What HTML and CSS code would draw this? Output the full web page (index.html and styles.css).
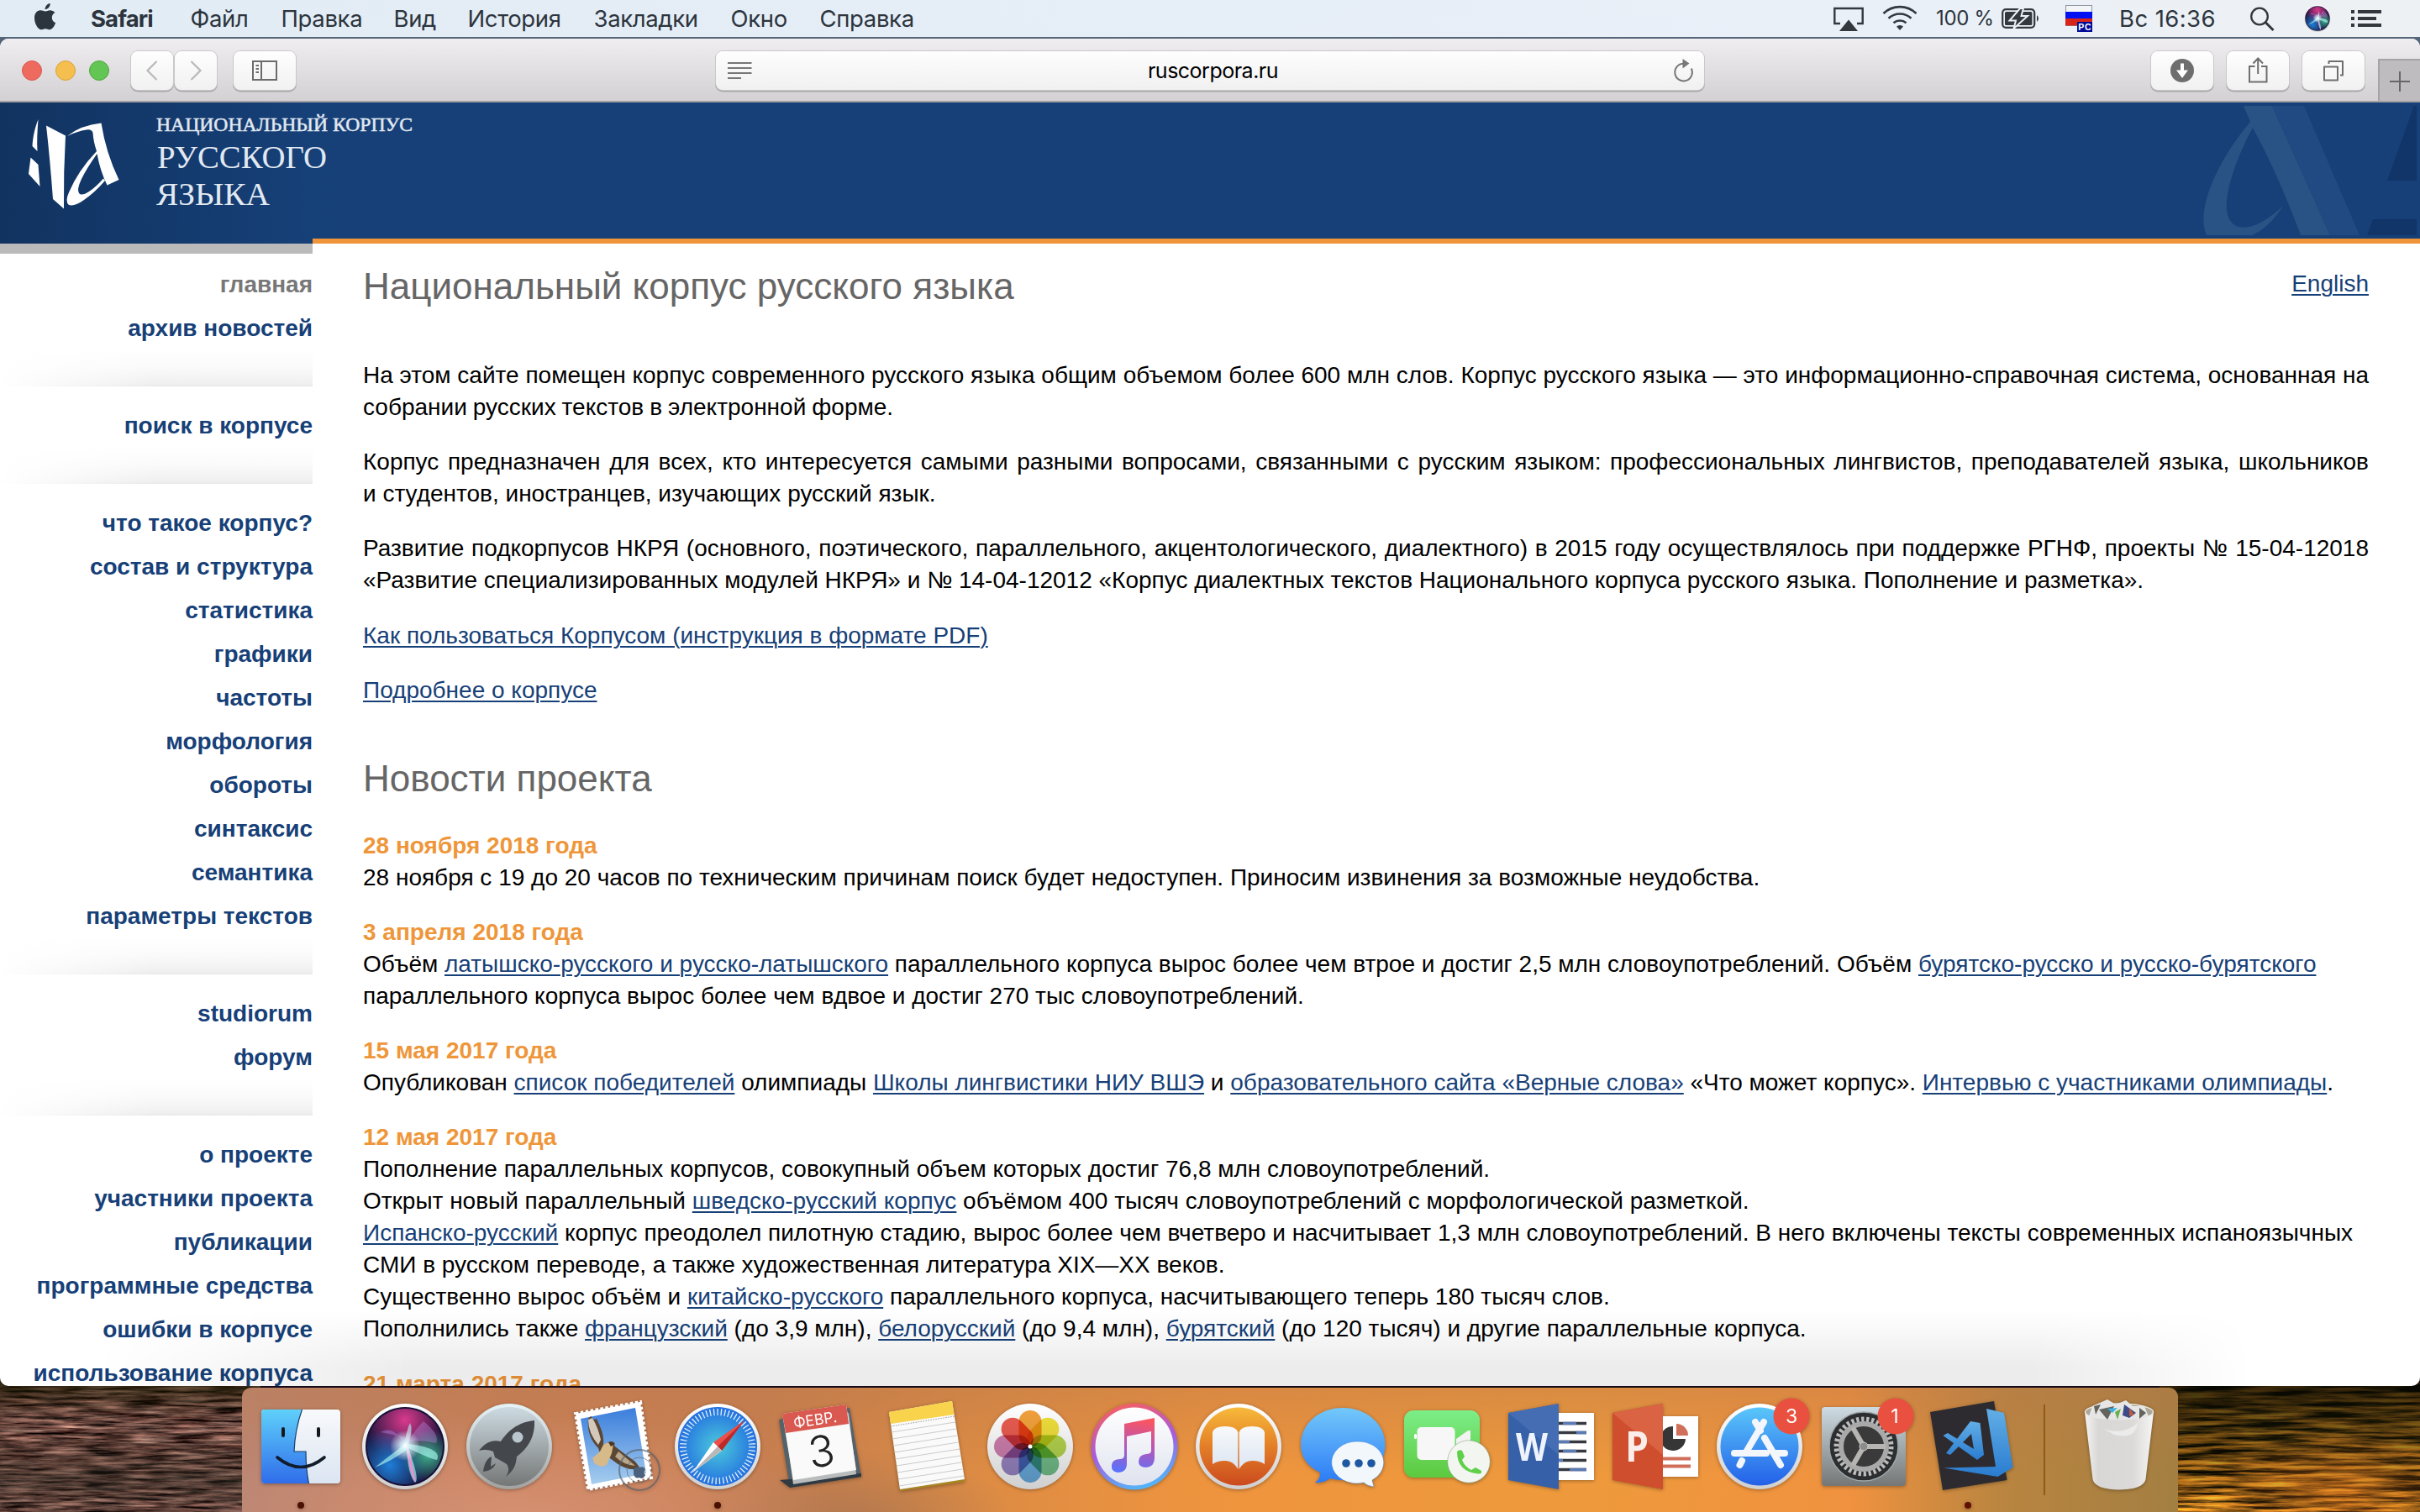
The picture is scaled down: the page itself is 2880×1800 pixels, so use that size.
FILE: index.html
```html
<!DOCTYPE html>
<html lang="ru">
<head>
<meta charset="utf-8">
<title>Национальный корпус русского языка</title>
<link rel="stylesheet" href="styles.css">
</head>
<body>
<svg class="wallpaper" width="2880" height="160" viewBox="0 0 2880 160">
  <defs>
    <filter id="ripL" x="0" y="0" width="100%" height="100%" color-interpolation-filters="sRGB">
      <feTurbulence type="fractalNoise" baseFrequency="0.02 0.26" numOctaves="5" seed="4"/>
      <feColorMatrix values="1.3 0 0 0 -0.25  1.0 .1 0 0 -0.28  .9 .1 0 0 -0.26  0 0 0 0 1"/>
    </filter>
    <filter id="ripR" x="0" y="0" width="100%" height="100%" color-interpolation-filters="sRGB">
      <feTurbulence type="fractalNoise" baseFrequency="0.012 0.2" numOctaves="5" seed="9"/>
      <feColorMatrix values="2.6 .3 0 0 -0.93  1.6 .1 0 0 -0.52  .4 0 0 0 -0.12  0 0 0 0 1"/>
    </filter>
    <linearGradient id="shade" x1="0" y1="0" x2="0" y2="1"><stop offset="0" stop-color="#080802" stop-opacity=".85"/><stop offset=".45" stop-color="#181805" stop-opacity=".5"/><stop offset="1" stop-color="#301800" stop-opacity="0"/></linearGradient>
    <linearGradient id="shadeL" x1="0" y1="0" x2="0" y2="1"><stop offset="0" stop-color="#1c1c00" stop-opacity=".8"/><stop offset=".35" stop-color="#281c10" stop-opacity="0"/><stop offset=".75" stop-color="#282820" stop-opacity=".45"/><stop offset="1" stop-color="#282820" stop-opacity=".1"/></linearGradient>
    <radialGradient id="glow" cx=".7" cy=".85" r=".5"><stop offset="0" stop-color="#e87a22" stop-opacity=".45"/><stop offset="1" stop-color="#c07020" stop-opacity="0"/></radialGradient>
  </defs>
  <rect width="2880" height="160" fill="#150a18"/>
  <rect width="310" height="160" filter="url(#ripL)"/><rect width="310" height="160" fill="url(#shadeL)"/>
  <rect x="2570" width="310" height="160" filter="url(#ripR)"/><rect x="2570" width="310" height="160" fill="url(#shade)"/><rect x="2570" width="310" height="160" fill="url(#glow)"/>
</svg>

<header class="menubar">
  <svg class="apple" width="30" height="34" viewBox="0 0 30 34"><path d="M15 9.500c-2-.3-3.500-1.200-5.800-1.200C4.700 8.300 2 12.300 2 17.500c0 6.500 4.200 13.800 8 13.800 2 0 2.900-1.100 5.100-1.100 2.200 0 3 1.100 5 1.100 3.200 0 6-4.600 7-8.200-2.700-1.200-4.300-3.300-4.300-6.200 0-2.600 1.400-4.500 3.600-5.800-1.500-2-3.600-2.900-6-2.900-2.200 0-3.600 1.300-5.400 1.300zM14.500 7.200c.2-3.600 2.600-6.600 6.200-7.200.3 3.700-2.800 7.200-6.200 7.200z" fill="#2c343d"/></svg>
  <nav class="menus">
    <span class="m app">Safari</span><span class="m m1">Файл</span><span class="m m2">Правка</span><span class="m m3">Вид</span><span class="m m4">История</span><span class="m m5">Закладки</span><span class="m m6">Окно</span><span class="m m7">Справка</span>
  </nav>
  <div class="status">
    <svg class="s-air" width="36" height="30" viewBox="0 0 36 30"><path d="M8 20H1.300V2H34.700V20H28" fill="none" stroke="#33383f" stroke-width="2.400"/><path d="M18 15.500L29 29H7z" fill="#33383f"/></svg>
    <svg class="s-wifi" width="42" height="30" viewBox="0 0 42 30"><g fill="none" stroke="#33383f" stroke-width="2.600"><path d="M1.500 10A28 28 0 0 1 40.500 10"/><path d="M7.500 15.800A20 20 0 0 1 34.500 15.800"/><path d="M13.500 21.300A11.500 11.500 0 0 1 28.500 21.300"/></g><path d="M17 25.500a6 6 0 0 1 8 0L21 30z" fill="#33383f"/></svg>
    <span class="pct">100 %</span>
    <svg class="s-bat" width="46" height="24" viewBox="0 0 46 24"><rect x="1.200" y="1.200" width="38" height="21.600" rx="4" fill="none" stroke="#33383f" stroke-width="2.200"/><rect x="4" y="4" width="32.400" height="16" rx="1.500" fill="#33383f"/><path d="M42 8q4 4 0 8z" fill="#33383f"/><path d="M22 0L9.500 14.500H17L14.500 24 31 9H23.500L26 0z" fill="#33383f" stroke="#eaf0f7" stroke-width="2"/></svg>
    <svg class="s-flag" width="32" height="34" viewBox="0 0 32 34"><rect x=".5" y=".5" width="31" height="24" fill="#f2f4f6" stroke="#8d95a0"/><rect y="8" width="32" height="8" fill="#0010f0"/><rect y="16" width="32" height="8.500" fill="#d82318"/><rect x="14" y="20" width="18" height="12" fill="#000a9a"/><text x="15.200" y="30" font-family="Liberation Sans, sans-serif" font-weight="700" font-size="10.500" textLength="15.500" fill="#fff">РС</text></svg>
    <span class="clock">Вс 16:36</span>
    <svg class="s-find" width="30" height="30" viewBox="0 0 30 30"><circle cx="11" cy="11.500" r="9.800" fill="none" stroke="#33383f" stroke-width="2.300"/><path d="M18 18.500L27.500 28" stroke="#33383f" stroke-width="3"/></svg>
    <svg class="s-siri" width="32" height="32" viewBox="11 19 102 102"><use href="#siri"/></svg>
    <svg class="s-list" width="36" height="22" viewBox="0 0 36 22"><path d="M0 3H4M0 11H4M0 19H4M8 3H36M8 11H30M8 19H36" stroke="#33383f" stroke-width="3.800"/></svg>
  </div>
</header>

<main class="window">
  <div class="toolbar">
    <div class="lights"><i class="red"></i><i class="yellow"></i><i class="green"></i></div>
    <div class="navbtns">
      <div class="btn half"><svg width="50" height="46" viewBox="0 0 50 46"><path d="M30.500 12L19.500 23 30.500 34" fill="none" stroke="#b9b9b9" stroke-width="2.200"/></svg></div>
      <div class="btn half"><svg width="50" height="46" viewBox="0 0 50 46"><path d="M19.500 12L30.500 23 19.500 34" fill="none" stroke="#b9b9b9" stroke-width="2.200"/></svg></div>
    </div>
    <div class="btn side"><svg width="74" height="46" viewBox="0 0 74 46"><path d="M23 12H51V34H23zM33 12V34" fill="none" stroke="#6c6c6c" stroke-width="2"/><path d="M26.500 17H30M26.500 21H30M26.500 25H30" stroke="#6c6c6c" stroke-width="2"/></svg></div>
    <div class="address">
      <svg width="30" height="24" viewBox="0 0 30 24"><path d="M0 3H28.500M0 9H28.500M0 15H28.500M0 21H16" stroke="#777" stroke-width="2"/></svg>
      <span>ruscorpora.ru</span>
      <svg width="26" height="30" viewBox="0 0 26 30"><path d="M21.800 12.500A10.300 10.300 0 1 1 12.500 6.800" fill="none" stroke="#777" stroke-width="2"/><path d="M11.500 1L19.500 6.500 11.500 12.500z" fill="#777"/></svg>
    </div>
    <div class="actions">
      <div class="btn"><svg width="74" height="46" viewBox="0 0 74 46"><circle cx="37" cy="23" r="14" fill="#6e6e6e"/><path d="M35 14.500H39V22.500H44L37 32 30 22.500H35z" fill="#fff"/></svg></div>
      <div class="btn"><svg width="74" height="46" viewBox="0 0 74 46"><path d="M33.500 18H27V36.500H47.500V18H41M37.200 27V9M31.500 14.500L37.200 8.500 43 14.500" fill="none" stroke="#6e6e6e" stroke-width="2"/></svg></div>
      <div class="btn"><svg width="74" height="46" viewBox="0 0 74 46"><path d="M26 18.500H42V34.500H26zM31.500 15V12H48V28.500H45" fill="none" stroke="#6e6e6e" stroke-width="2" stroke-linejoin="round"/></svg></div>
    </div>
    <div class="newtab"><svg width="24" height="24" viewBox="0 0 24 24"><path d="M0 12H24M12 0V24" stroke="#666" stroke-width="2"/></svg></div>
  </div>

  <div class="banner">
    <svg class="logo" width="520" height="168" viewBox="0 122 520 168">
      <g fill="#fff"><path d="M45.500 142C41 153 39 165 38.500 174L44.500 180C43.800 168 44.500 155 45.500 142z"/><path d="M36.500 187.500L45.500 196 47.500 222 34 207z"/><path d="M55 149.500L78 161.500Q75.500 205 76 248.500L63 237Q59.500 190 55 149.500z"/><path d="M80 162Q96 149 120.500 146.500Q126 182 141.500 214L127.500 220.500Q119 203 115.500 183Q104 199 97 213Q91 226 94 230Q97 234 106 228Q115 222 123 212.500L125 215Q113 229 100 238Q89 246 82 244Q77 240 82 229Q93 203 115 180Q111 168 110.500 158Q109 153.500 103 154.500Q92 156 80 162z"/></g>
      <g fill="#e2e9f2" font-family="Liberation Serif, serif"><text x="186" y="155.800" font-size="23.500" stroke="#e2e9f2" stroke-width=".5" textLength="305" lengthAdjust="spacingAndGlyphs">НАЦИОНАЛЬНЫЙ КОРПУС</text><text x="187" y="200" font-size="38" textLength="202" lengthAdjust="spacingAndGlyphs">РУССКОГО</text><text x="186" y="244" font-size="38" textLength="135" lengthAdjust="spacingAndGlyphs">ЯЗЫКА</text></g>
    </svg>
    <svg class="mark" width="260" height="154" viewBox="2616 126 260 154">
      <path d="M2670 126H2704L2773 280H2738Q2710 205 2681 152C2660 190 2648 230 2650 250C2653 277 2680 280 2717 245Q2700 272 2680 280H2626C2612 250 2640 190 2678 145z" fill="#2a5385"/><path d="M2704 126H2742L2808 280H2773z" fill="#214a82"/>
      <path d="M2873 126H2876V215H2841zM2824 261H2876V280H2817z" fill="#113469"/>
    </svg>
  </div>

  <div class="page">
    <aside class="sidebar">
      <ul><li class="current">главная</li><li>архив новостей</li></ul>
      <ul><li>поиск в корпусе</li></ul>
      <ul><li>что такое корпус?</li><li>состав и структура</li><li>статистика</li><li>графики</li><li>частоты</li><li>морфология</li><li>обороты</li><li>синтаксис</li><li>семантика</li><li>параметры текстов</li></ul>
      <ul><li>studiorum</li><li>форум</li></ul>
      <ul><li>о проекте</li><li>участники проекта</li><li>публикации</li><li>программные средства</li><li>ошибки в корпусе</li><li>использование корпуса</li></ul>
    </aside>
    <article class="content">
      <div class="head"><h1>Национальный корпус русского языка</h1><a>English</a></div>
      <p class="intro">На этом сайте помещен корпус современного русского языка общим объемом более 600 млн слов. Корпус русского языка — это информационно-справочная система, основанная на собрании русских текстов в электронной форме.</p>
      <p>Корпус предназначен для всех, кто интересуется самыми разными вопросами, связанными с русским языком: профессиональных лингвистов, преподавателей языка, школьников и&nbsp;студентов, иностранцев, изучающих русский язык.</p>
      <p>Развитие подкорпусов НКРЯ (основного, поэтического, параллельного, акцентологического, диалектного) в 2015 году осуществлялось при поддержке РГНФ, проекты № 15-04-12018 «Развитие специализированных модулей НКРЯ» и № 14-04-12012 «Корпус диалектных текстов Национального корпуса русского языка. Пополнение и разметка».</p>
      <p><a>Как пользоваться Корпусом (инструкция в формате PDF)</a></p>
      <p><a>Подробнее о корпусе</a></p>
      <h2>Новости проекта</h2>
      <section><h3>28 ноября 2018 года</h3>28 ноября с 19 до 20 часов по техническим причинам поиск будет недоступен. Приносим извинения за возможные неудобства.</section>
      <section><h3>3 апреля 2018 года</h3>Объём <a>латышско-русского и русско-латышского</a> параллельного корпуса вырос более чем втрое и достиг 2,5 млн словоупотреблений. Объём <a>бурятско-русско и русско-бурятского</a> параллельного корпуса вырос более чем вдвое и достиг 270 тыс словоупотреблений.</section>
      <section><h3>15 мая 2017 года</h3>Опубликован <a>список победителей</a> олимпиады <a>Школы лингвистики НИУ ВШЭ</a> и <a>образовательного сайта «Верные слова»</a> «Что может корпус». <a>Интервью с участниками олимпиады</a>.</section>
      <section><h3>12 мая 2017 года</h3>Пополнение параллельных корпусов, совокупный объем которых достиг 76,8 млн словоупотреблений.<br>Открыт новый параллельный <a>шведско-русский корпус</a> объёмом 400 тысяч словоупотреблений с морфологической разметкой.<br><a>Испанско-русский</a> корпус преодолел пилотную стадию, вырос более чем вчетверо и насчитывает 1,3 млн словоупотреблений. В него включены тексты современных испаноязычных СМИ в русском переводе, а также художественная литература XIX—XX веков.<br>Существенно вырос объём и <a>китайско-русского</a> параллельного корпуса, насчитывающего теперь 180 тысяч слов.<br>Пополнились также <a>французский</a> (до 3,9 млн), <a>белорусский</a> (до 9,4 млн), <a>бурятский</a> (до 120 тысяч) и другие параллельные корпуса.</section>
      <section><h3>21 марта 2017 года</h3></section>
    </article>
  </div>
</main>

<footer class="dock">
  <!-- Finder -->
  <svg viewBox="0 0 124 148"><defs><linearGradient id="fb" x1="0" y1="0" x2="0" y2="1"><stop offset="0" stop-color="#5fd0fa"/><stop offset="1" stop-color="#2f6dea"/></linearGradient><linearGradient id="fw" x1="0" y1="0" x2="0" y2="1"><stop offset="0" stop-color="#f8f9fb"/><stop offset="1" stop-color="#dbe5f2"/></linearGradient><linearGradient id="ring" x1="0" y1="0" x2="0" y2="1"><stop offset="0" stop-color="#fff"/><stop offset="1" stop-color="#cfcfcf"/></linearGradient></defs>
    <rect x="15" y="26" width="94" height="88" rx="4" fill="url(#fw)"/><path d="M19 26H63.500Q55 50 54 76H68Q68 97 71.500 114H19q-4 0-4-4V30q0-4 4-4z" fill="url(#fb)"/><path d="M63.500 26Q55 50 54 76H68Q68 97 71.500 114" fill="none" stroke="#17406c" stroke-width="1.200"/><path d="M41 49V57M83 49V57" stroke="#14181c" stroke-width="4" stroke-linecap="round"/><path d="M34 83Q62 106 90 83" fill="none" stroke="#101c2c" stroke-width="3.600" stroke-linecap="round"/><circle cx="62" cy="140" r="4" fill="#4a1000"/></svg>
  <!-- Siri -->
  <svg viewBox="0 0 124 148"><defs><radialGradient id="sr1" cx=".5" cy=".15" r=".55"><stop offset="0" stop-color="#d93a8c"/><stop offset="1" stop-color="#d93a8c" stop-opacity="0"/></radialGradient><radialGradient id="sr2" cx=".3" cy=".75" r=".5"><stop offset="0" stop-color="#1f7ed8"/><stop offset="1" stop-color="#1f7ed8" stop-opacity="0"/></radialGradient><radialGradient id="sr3" cx=".8" cy=".62" r=".35"><stop offset="0" stop-color="#3fae8c"/><stop offset="1" stop-color="#3fae8c" stop-opacity="0"/></radialGradient><radialGradient id="sr4"><stop offset="0" stop-color="#fff"/><stop offset=".3" stop-color="#dff" stop-opacity=".8"/><stop offset="1" stop-color="#fff" stop-opacity="0"/></radialGradient></defs>
    <g id="siri"><circle cx="62" cy="70" r="51" fill="url(#ring)"/><circle cx="62" cy="70" r="47" fill="#171038"/><circle cx="62" cy="70" r="45" fill="url(#sr1)"/><circle cx="62" cy="70" r="45" fill="url(#sr2)"/><circle cx="62" cy="70" r="45" fill="url(#sr3)"/><path d="M61 68Q42 82 26 95Q45 88 64 74Q66 105 74 113Q80 110 66 72Q90 84 100 86Q107 72 66 67Q72 50 68 42Q64 50 61 68z" fill="#a8f4ee" opacity=".65"/><path d="M33 53Q48 44 61 67Q72 60 99 66Q104 56 84 40Q76 48 68 60" fill="#b58ae0" opacity=".4"/><path d="M62 70L67 44 66 70 75 112Q70 112 64 76z" fill="#ff8ad0" opacity=".8"/><circle cx="62" cy="69" r="18" fill="url(#sr4)"/></g></svg>
  <!-- Launchpad -->
  <svg viewBox="0 0 124 148"><defs><linearGradient id="lp" x1="0" y1="0" x2="0" y2="1"><stop offset="0" stop-color="#cddbe2"/><stop offset="1" stop-color="#757776"/></linearGradient><linearGradient id="lpr" x1="0" y1="0" x2="0" y2="1"><stop offset="0" stop-color="#e6f3f7"/><stop offset="1" stop-color="#a2a29f"/></linearGradient></defs>
    <circle cx="62" cy="70" r="51" fill="url(#lpr)"/><circle cx="62" cy="70" r="47" fill="url(#lp)"/><path d="M92 39C72 41 60 52 52 64C40 61 32 67 26 75C34 73 38 74 43 76L45 83 54 88 59 91C62 96 62 100 58 106C68 98 70 92 71 82C83 73 93 60 92 39zM41 82C34 85 32 93 31 100C38 99 43 97 46 90L40 94z" fill="#44484c"/><circle cx="72" cy="59" r="6.500" fill="#b9c6ce"/></svg>
  <!-- Mail -->
  <svg viewBox="0 0 124 148"><defs><linearGradient id="sky" x1="0" y1="0" x2="0" y2="1"><stop offset="0" stop-color="#3b7edc"/><stop offset="1" stop-color="#a6cdee"/></linearGradient></defs>
    <path d="M17 31L94 17 107 107 32 121z" fill="#fff" stroke="#fff" stroke-width="4" stroke-dasharray="3.500 2.500"/><path d="M23 37L88 24 101 102 36 115z" fill="url(#sky)"/><path d="M32 37L35 34 39 38 42 37 46 46Q51 57 50 68L56 65 62 66 64 70Q74 78 88 88L94 96Q80 100 66 90L58 84Q46 82 44 72Q30 58 32 37z" fill="#5a4632"/><path d="M32 38Q32 54 44 68L47 62Q44 48 37 36z" fill="#d3c8ba"/><path d="M64 82Q74 92 88 93L80 86 68 76z" fill="#b9a58a"/><path d="M50 68Q56 63 62 67L60 78 54 92 48 94 40 91 37 84 46 76z" fill="#d7ba8a"/><path d="M56 65Q61 62 64 67L59 70z" fill="#4b3822"/><g fill="none" stroke="#55606c" opacity=".65"><circle cx="93" cy="98" r="24" stroke-width="2"/><circle cx="93" cy="98" r="15"/></g><path d="M86 97q3-4 7-2q5-2 7 2q-3 4 0 7q-3 6-7 3q-5 2-7-4zM93 93l3-5z" fill="#4c617c"/></svg>
  <!-- Safari -->
  <svg viewBox="0 0 124 148"><defs><radialGradient id="sf"><stop offset="0" stop-color="#4ccadb"/><stop offset="1" stop-color="#236fe0"/></radialGradient></defs>
    <circle cx="62" cy="70" r="51" fill="url(#ring)"/><circle cx="62" cy="70" r="47" fill="url(#sf)"/><circle cx="62" cy="70" r="41" fill="none" stroke="#e4f1fb" stroke-width="8" stroke-dasharray="1.300 3.070"/><path d="M94 39L57 65 67 75z" fill="#ee4f49"/><path d="M94 39L62 70 67 75z" fill="#bb2a29"/><path d="M32 101L57 65 67 75z" fill="#fff"/><path d="M32 101L62 70 67 75z" fill="#b8b8b8"/><circle cx="62" cy="140" r="4" fill="#4a1000"/></svg>
  <!-- Calendar -->
  <svg viewBox="0 0 124 148"><path d="M11 38L95 24 109 106 24 119z" fill="#54626b"/><path d="M12 110L109 102 109 106 24 119z" fill="#2f3a42"/><path d="M18 42L94 30 103 103 28 115z" fill="#b9bcbd"/><path d="M15 31L91 20 103 98 28 110z" fill="#fafafa"/><path d="M15 31L91 20 94 43 19 54z" fill="#d95850"/><g transform="rotate(-8.500 60 65)" text-anchor="middle"><text x="58" y="44" font-family="Inter, sans-serif" font-size="18" textLength="52" lengthAdjust="spacingAndGlyphs" fill="#fff">ФЕВР.</text><text x="60" y="94" font-family="Inter, sans-serif" font-size="51" font-weight="300" fill="#222">3</text></g></svg>
  <!-- Notes -->
  <svg viewBox="0 0 124 148"><path d="M18 29L93 16 108 112 31 123z" fill="#a88523"/><path d="M18 29L93 16 108 109 31 121z" fill="#fafafa"/><path d="M18 29L93 16 95.500 32 20 43z" fill="#f9d34b"/><path d="M20 46L96 34" stroke="#999" stroke-dasharray="1.500 1.500"/><path d="M21 53L97 41M22 61L98 49M23 69L99 57M24.500 77L100.500 65M25.500 85L102 73M27 93L103 81M28 101L104 89M29 109L105.500 97M30 117L107 105" stroke="#cbcbcb"/></svg>
  <!-- Photos -->
  <svg viewBox="0 0 124 148"><circle cx="62" cy="70" r="51" fill="url(#ring)"/><g class="petals"><rect x="48.500" y="27" width="27" height="43" rx="13.500" fill="#f3a23c"/><rect x="48.500" y="27" width="27" height="43" rx="13.500" fill="#f0e03c" transform="rotate(45 62 70)"/><rect x="48.500" y="27" width="27" height="43" rx="13.500" fill="#b6d64e" transform="rotate(90 62 70)"/><rect x="48.500" y="27" width="27" height="43" rx="13.500" fill="#74c08a" transform="rotate(135 62 70)"/><rect x="48.500" y="27" width="27" height="43" rx="13.500" fill="#6aaee0" transform="rotate(180 62 70)"/><rect x="48.500" y="27" width="27" height="43" rx="13.500" fill="#9a86c4" transform="rotate(225 62 70)"/><rect x="48.500" y="27" width="27" height="43" rx="13.500" fill="#d081b0" transform="rotate(270 62 70)"/><rect x="48.500" y="27" width="27" height="43" rx="13.500" fill="#ea5c50" transform="rotate(315 62 70)"/></g><circle cx="62" cy="70" r="2.500" fill="#fff"/></svg>
  <!-- iTunes -->
  <svg viewBox="0 0 124 148"><defs><linearGradient id="it" x1=".3" y1="0" x2=".6" y2="1"><stop offset="0" stop-color="#f8605c"/><stop offset=".5" stop-color="#a65be0"/><stop offset="1" stop-color="#4fb8f8"/></linearGradient><linearGradient id="nt" gradientUnits="userSpaceOnUse" x1="70" y1="38" x2="60" y2="102"><stop offset="0" stop-color="#fa5560"/><stop offset=".5" stop-color="#b457b8"/><stop offset="1" stop-color="#5a72fb"/></linearGradient><linearGradient id="iw" x1="0" y1="0" x2="0" y2="1"><stop offset="0" stop-color="#fff"/><stop offset="1" stop-color="#dfe3ee"/></linearGradient></defs>
    <circle cx="62" cy="70" r="51.500" fill="url(#it)"/><circle cx="62" cy="70" r="46.500" fill="url(#iw)"/><path d="M50 43L86 36V84Q86 94 76 95Q67 95 67 88Q67 80 76 79Q82 79 82 75V52L53 58V90Q53 101 42 101Q34 100 35 92Q36 85 45 85Q50 85 50 80z" fill="url(#nt)"/></svg>
  <!-- iBooks -->
  <svg viewBox="0 0 124 148"><defs><linearGradient id="ib" x1="0" y1="0" x2="0" y2="1"><stop offset="0" stop-color="#f7ba3b"/><stop offset=".5" stop-color="#e37e27"/><stop offset="1" stop-color="#cb4a1e"/></linearGradient></defs>
    <circle cx="62" cy="70" r="51" fill="url(#ring)"/><circle cx="62" cy="70" r="46.500" fill="url(#ib)"/><path d="M31 53Q33 46 46 46Q59 46 61.300 53V97Q55 86 45 87Q37 87 31 91zM93 53Q91 46 78 46Q65 46 62.700 53V97Q69 86 79 87Q87 87 93 91z" fill="url(#fw)"/></svg>
  <!-- Messages -->
  <svg viewBox="0 0 124 148"><defs><linearGradient id="ms" x1="0" y1="0" x2="0" y2="1"><stop offset="0" stop-color="#73c8fa"/><stop offset="1" stop-color="#2c7bf6"/></linearGradient></defs>
    <path d="M62 24C90 24 112.500 43 112.500 68S90 110 62 110Q54 110 47 108Q39 114 29 113Q36 108 35 101Q12 90 12 68C12 43 34 24 62 24z" fill="url(#ms)"/><path d="M80 64a30 25 0 0 1 17 46l2 8q-8-1-12-5A30 25 0 1 1 80 64z" fill="#f2f7fb" stroke="#2d76c8" stroke-opacity=".4"/><circle cx="66" cy="90" r="4.800" fill="#1f58a2"/><circle cx="81" cy="90" r="4.800" fill="#1f58a2"/><circle cx="96" cy="90" r="4.800" fill="#1f58a2"/></svg>
  <!-- FaceTime -->
  <svg viewBox="0 0 124 148"><defs><linearGradient id="ft" x1="0" y1="0" x2="0" y2="1"><stop offset="0" stop-color="#7cee88"/><stop offset="1" stop-color="#5cc93e"/></linearGradient></defs>
    <rect x="11" y="27" width="90" height="80" rx="11" fill="url(#ft)"/><rect x="26.500" y="47" width="45" height="39" rx="5" fill="#f7f7f7"/><rect x="23" y="55" width="3" height="6" rx="1.500" fill="#fff"/><path d="M73 61L87 51H90V75L73 72z" fill="#f3f3f3"/><circle cx="88" cy="88" r="25.300" fill="#f3f5f1" stroke="#7a9a70" stroke-opacity=".5"/><path d="M74 76Q77 73 80 75L83 82 80 86Q83 94 91 98L96 95 103 99Q104 103 99 102.500Q74 100 74 76z" fill="#5fd04a"/></svg>
  <!-- Word -->
  <svg viewBox="0 0 124 148"><path d="M66 30H113V110H66z" fill="#fff"/><path d="M70 42.500H104M70 53.500H104M70 64.500H104M70 75.500H104M70 86.500H104M70 97.500H104" stroke="#363a40" stroke-width="3.600"/><path d="M76 42.500H92M92 53.500H104M70 64.500H84M76 75.500H92M70 86.500H76M84 97.500H104" stroke="#5b7bb5" stroke-width="3.600"/><path d="M11 30L71 19V121L11 110z" fill="#3660a8"/><path d="M11 30L71 19V80z" fill="#4c74b8" opacity=".7"/><text x="20" y="87" font-family="Open Sans, sans-serif" font-size="46" font-weight="700" fill="#eef3fd" textLength="38" lengthAdjust="spacingAndGlyphs">W</text></svg>
  <!-- PowerPoint -->
  <svg viewBox="0 0 124 148"><path d="M66 34H113V106H66z" fill="#fff"/><path d="M83 46V61H98A15 14.500 0 1 1 83 46z" fill="#363636"/><path d="M87 43A14 14 0 0 1 101 57H87z" fill="#d0705a"/><path d="M70 84.500H104M70 93.500H104" stroke="#d0705a" stroke-width="3.800"/><path d="M11 30L71 19V121L11 110z" fill="#cf4e2e"/><path d="M11 30L71 19V80z" fill="#dd6c4c" opacity=".7"/><text x="26" y="88" font-family="Open Sans, sans-serif" font-size="50" font-weight="700" fill="#fbeeea" textLength="28" lengthAdjust="spacingAndGlyphs">P</text></svg>
  <!-- App Store -->
  <svg viewBox="0 0 124 148"><defs><linearGradient id="as" x1="0" y1="0" x2="0" y2="1"><stop offset="0" stop-color="#5ac6fa"/><stop offset="1" stop-color="#2360e8"/></linearGradient></defs>
    <circle cx="62" cy="70" r="51" fill="url(#ring)"/><circle cx="62" cy="70" r="46.500" fill="url(#as)"/><path d="M67 41L47 75M41 87L38.500 92M57 41L63 51M68 60L87 92M32 78H70M82 78H92" stroke="#f3f6fa" stroke-width="8" stroke-linecap="round"/><circle cx="100" cy="34" r="21.500" fill="#e9503f"/><text x="100" y="42" text-anchor="middle" font-family="Inter, sans-serif" font-size="23" fill="#fff">3</text></svg>
  <!-- System Preferences -->
  <svg viewBox="0 0 124 148"><rect x="12" y="23" width="100" height="94" rx="4" fill="url(#lp)"/><circle cx="62" cy="70" r="41" fill="#2c2e30" stroke="#9fa6aa" stroke-width="1.500"/><circle cx="62" cy="70" r="32.500" fill="none" stroke="#bcbcbc" stroke-width="6" stroke-dasharray="3.300 2.700"/><circle cx="62" cy="70" r="27" fill="#3a3a3a" stroke="#a9a9a9" stroke-width="6"/><path d="M62 70H88M62 70L49 47.500M62 70L49 92.500" stroke="#b7b5b1" stroke-width="6"/><circle cx="62" cy="70" r="5" fill="#8c8c8c" stroke="#ccc"/><circle cx="100" cy="34" r="21.500" fill="#e9503f"/><text x="99" y="42" text-anchor="middle" font-family="Inter, sans-serif" font-size="23" fill="#fff">1</text></svg>
  <!-- VS Code -->
  <svg viewBox="0 0 124 148"><defs><linearGradient id="vs" x1="0" y1="0" x2="0" y2="1"><stop offset="0" stop-color="#62aee6"/><stop offset="1" stop-color="#2a7cd0"/></linearGradient></defs>
    <path d="M17 29L93 16 108.500 110 32 122z" fill="#2d2b2f"/><path d="M84 25L105 30 115.500 95 97.500 106 33 95.500 95 94z" fill="url(#vs)"/><path d="M65 40L76.500 42 81 80 73 86 32.400 57 38 54 69 73 66 55 41 80 36 78z" fill="url(#vs)"/><circle cx="62" cy="140" r="4" fill="#600f00"/></svg>
  <div class="sep"></div>
  <!-- Trash -->
  <svg class="trash" viewBox="0 0 124 148"><defs><linearGradient id="tr" x1="0" y1="0" x2="1" y2="0"><stop offset="0" stop-color="#f4f4f2"/><stop offset=".2" stop-color="#d8d7d5"/><stop offset=".7" stop-color="#dcdad8"/><stop offset="1" stop-color="#f5f5f5"/></linearGradient></defs>
    <ellipse cx="62" cy="29" rx="40.500" ry="10" fill="#aaa698" stroke="#e8e6de" stroke-width="1.500"/><path d="M26 34L30 22 48 14 58 20 70 15 78 22 92 22 97 34 80 39H44z" fill="#e6e6e6"/><path d="M38 26L56 22 48 38zM86 24L94 30 86 37zM32 22L40 20 34 32z" fill="#64645f"/><path d="M68 20L82 30 74 36 66 33z" fill="#3c4a86"/><path d="M74 24L80 32 74 34z" fill="#c05a3a"/><path d="M48 25L60 24 54 30z" fill="#3bb3e0"/><path d="M57 29L64 25 60 38z" fill="#6ab04a"/><path d="M21 29Q24 38 62 38.500Q100 38 103 29L93.500 109Q91 121 62 121.500Q33 121 30.500 109z" fill="url(#tr)"/><path d="M42 48Q66 58 84 42Q82 62 56 56z" fill="#ebebeb"/></svg>
</footer>
</body>
</html>
```
FILE: styles.css
```css
* { box-sizing: border-box; }
html, body { margin: 0; }
body {
  width: 2880px; height: 1800px; overflow: hidden; position: relative;
  display: flex; flex-direction: column;
  background: #52647a; color: #000;
  font: 28px/38px "Liberation Sans", Arial, sans-serif;
}
svg { display: block; flex: none; }
.wallpaper { position: absolute; left: 0; bottom: 0; z-index: -1; }

/* menu bar */
.menubar {
  flex: none; height: 46px; display: flex; padding-left: 39px;
  background: linear-gradient(90deg, #e2ecf5, #e6eef7 50%, #eaf0f8 78%, #eef1f3);
  border-bottom: 2px solid #566679;
  font-family: Inter, sans-serif; font-size: 27.500px; line-height: 44px; color: #2c343d;
}
.apple { margin-top: 4px; width: 30px; }
.menus { display: flex; margin-left: 39px; }
.m { white-space: nowrap; letter-spacing: -.35px; }
.app { width: 118.500px; font-weight: 700; letter-spacing: -.9px; }
.m1 { width: 108px; }
.m2 { width: 134px; }
.m3 { width: 88px; }
.m4 { width: 150px; }
.m5 { width: 163px; }
.m6 { width: 106px; }
.status { margin-left: auto; display: flex; padding-right: 46px; }
.s-air { margin-top: 8px; }
.s-wifi { margin: 6px 0 0 22px; }
.pct { width: 68px; margin-left: 22px; font-size: 24px; letter-spacing: -.3px; white-space: nowrap; }
.s-bat { margin: 10px 0 0 10px; }
.s-flag { margin: 6px 0 0 30px; }
.clock { width: 115px; margin-left: 32px; letter-spacing: .4px; white-space: nowrap; }
.s-find { margin: 8px 0 0 41px; }
.s-siri { margin: 6px 0 0 34px; }
.s-list { margin: 11px 0 0 24px; }

/* browser window */
.window { flex: none; height: 1604px; border-radius: 10px; overflow: hidden; background: #fff; display: flex; flex-direction: column; position: relative; }
.window::after {
  content: ""; position: absolute; left: 0; right: 0; bottom: 0; height: 90px; pointer-events: none;
  background: linear-gradient(180deg, #0000, #00000013 75%);
  mask-image: linear-gradient(90deg, #0000 4%, #000 17%, #000 84%, #0000 93%);
}
.toolbar {
  flex: none; height: 76px; display: flex; align-items: flex-start; padding: 15px 0 0 26px;
  background: linear-gradient(#f0eef0, #ece9ec 15%, #d4d2d4 95%); border-bottom: 2px solid #a3a0a3;
}
.lights { display: flex; gap: 16px; margin-top: 11px; width: 130px; }
.lights i { width: 24px; height: 24px; border-radius: 50%; border: 1px solid #d9574b; background: #ee6a5f; }
.lights .yellow { border-color: #d9a13c; background: #f5bf4f; }
.lights .green { border-color: #4ea73e; background: #62c554; }
.navbtns { display: flex; gap: 2px; margin-right: 20px; }
.btn { width: 74px; height: 46px; border-radius: 8px; background: linear-gradient(#fefefe, #f1f1f1); box-shadow: 0 0 0 1px #cac8ca, 0 1.500px 0 1px #aaa8aa; }
.half { width: 50px; }
.address {
  width: 1176px; height: 46px; margin-left: 500px; border-radius: 8px; padding: 0 11px 0 14px;
  display: flex; align-items: center; justify-content: space-between;
  background: linear-gradient(#fefefe, #f0f0f0); box-shadow: 0 0 0 1px #cac8ca, 0 1.500px 0 1px #aaa8aa;
  font: 25px/48px Inter, sans-serif; letter-spacing: -.5px;
}
.actions { display: flex; gap: 16px; margin-left: 532px; }
.newtab { width: 50px; height: 50px; margin: 9px 0 0 auto; background: #bebcbe; border: 2px solid #a5a3a5; border-width: 2px 0 0 2px; display: flex; align-items: center; padding: 2px 0 0 12px; }

.banner {
  flex: none; height: 168px; display: flex; justify-content: space-between;
  background: linear-gradient(#ef9439, #ef9439) 372px 162px / 2508px 6px no-repeat, linear-gradient(90deg, #113360, #164078 372px, #164077 400px);
}
.mark { margin: 4px 4px 0 0; }

.page { flex: 1; display: flex; min-height: 0; }
.sidebar { width: 372px; border-top: 12px solid #bababa; font-weight: 700; line-height: 52px; text-align: right; color: #164077; }
.sidebar ul {
  list-style: none; margin: 0; padding: 21px 0 43px; white-space: nowrap;
  background: linear-gradient(90deg, #fff, #fff0 50%) bottom / 100% 44px no-repeat, linear-gradient(#fff, #fafafa 50%, #efefef 95%, #e6e6e6) bottom / 100% 44px no-repeat;
}
.sidebar ul:first-child { padding-top: 11px; }
.current { color: #777; }

.content { width: 2387px; margin-left: 60px; }
.head { display: flex; justify-content: space-between; padding-top: 29px; }
h1, h2 { font-size: 44px; font-weight: 400; line-height: 44px; color: #666; margin: 0; }
h1 { height: 109px; }
.content p { margin: 0 0 27.200px; text-align: justify; }
.content .intro { word-spacing: -.8px; }
h2 { margin: 64px 0 39px; }
h3 { font-size: 28px; line-height: inherit; margin: 0; color: #ee9639; }
section { margin-bottom: 27.200px; }
a { color: #164077; text-decoration: underline; text-decoration-thickness: 2px; text-underline-offset: 3px; }

/* dock */
.dock {
  position: absolute; left: 288px; top: 1652px; width: 2304px; height: 148px; padding-left: 8px;
  display: flex; border-radius: 11px 11px 0 0;
  background:
    radial-gradient(ellipse 380px 130px at 330px 160px, #d8957acc, #d8957a00),
    radial-gradient(ellipse 200px 90px at 720px 160px, #ab7550cc, #ab755000),
    linear-gradient(#b9784a66, #f8a03c00 70%),
    linear-gradient(90deg, #bb8674, #c98058 14%, #c97f50 27%, #da8a45 36%, #ee943e 50%, #ee9a3c 68%, #f0923f 83%, #b98540 91%, #a37f42);
}
.dock > svg { width: 124px; height: 148px; filter: drop-shadow(0 1px 2px #0005); }
.petals rect { mix-blend-mode: multiply; }
.sep { width: 2px; height: 108px; margin: 20px 26px 0 28px; background: #8d5a1c; }
```
